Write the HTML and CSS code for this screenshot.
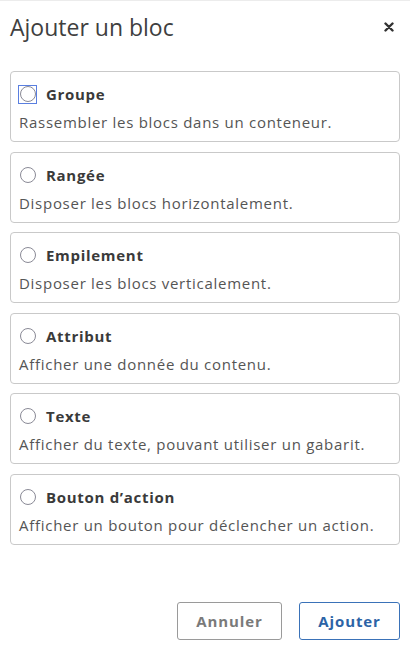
FILE: index.html
```html
<!DOCTYPE html>
<html lang="fr">
<head>
<meta charset="utf-8">
<title>Ajouter un bloc</title>
<link rel="stylesheet" href="styles.css">
</head>
<body>
<div class="dialog">
  <div class="header">
    <h1 class="title">Ajouter un bloc</h1>
    <button class="close" aria-label="Fermer">
      <svg width="10" height="10" viewBox="0 0 10 10"><path d="M1.5 1.5 L8.5 8.5 M8.5 1.5 L1.5 8.5" stroke="#333" stroke-width="2.4" stroke-linecap="round"/></svg>
    </button>
  </div>
  <div class="list">
    <label class="card">
      <span class="row"><span class="radio focus"><span class="circle"></span></span><span class="name">Groupe</span></span>
      <span class="desc">Rassembler les blocs dans un conteneur.</span>
    </label>
    <label class="card">
      <span class="row"><span class="radio"><span class="circle"></span></span><span class="name">Rangée</span></span>
      <span class="desc">Disposer les blocs horizontalement.</span>
    </label>
    <label class="card">
      <span class="row"><span class="radio"><span class="circle"></span></span><span class="name">Empilement</span></span>
      <span class="desc">Disposer les blocs verticalement.</span>
    </label>
    <label class="card">
      <span class="row"><span class="radio"><span class="circle"></span></span><span class="name">Attribut</span></span>
      <span class="desc">Afficher une donnée du contenu.</span>
    </label>
    <label class="card">
      <span class="row"><span class="radio"><span class="circle"></span></span><span class="name">Texte</span></span>
      <span class="desc">Afficher du texte, pouvant utiliser un gabarit.</span>
    </label>
    <label class="card">
      <span class="row"><span class="radio"><span class="circle"></span></span><span class="name">Bouton d’action</span></span>
      <span class="desc">Afficher un bouton pour déclencher un action.</span>
    </label>
  </div>
  <div class="footer">
    <button class="btn btn-cancel">Annuler</button>
    <button class="btn btn-primary">Ajouter</button>
  </div>
</div>
</body>
</html>
```
FILE: styles.css
```css
html, body {
  margin: 0;
  padding: 0;
  background: #fff;
}
body {
  font-family: "Open Sans", "Noto Sans", sans-serif;
  color: #3a3a3a;
}
.dialog {
  width: 410px;
  height: 652px;
  box-sizing: border-box;
  border-top: 1px solid #ececec;
  display: flex;
  flex-direction: column;
}
.header {
  display: flex;
  align-items: center;
  justify-content: space-between;
  padding: 11px 16px 0 10px;
}
.title {
  margin: 0;
  font-size: 23px;
  font-weight: 400;
  line-height: 30px;
  color: #3f3f3f;
}
.close {
  border: 0;
  background: none;
  padding: 0;
  width: 10px;
  height: 10px;
  display: flex;
}
.list {
  display: flex;
  flex-direction: column;
  gap: 9.5px;
  padding: 29px 10px 0 10px;
}
.card {
  display: flex;
  flex-direction: column;
  border: 1px solid #c9c9c9;
  border-radius: 4px;
  padding: 10px 8px 9px 8px;
}
.row {
  display: flex;
  align-items: center;
  height: 24px;
}
.radio {
  width: 19px;
  height: 19px;
  box-sizing: border-box;
  display: flex;
  align-items: center;
  justify-content: center;
  margin-left: -1px;
  margin-right: 9px;
}
.radio.focus {
  outline: 1.5px solid #5a7fe0;
  outline-offset: -1px;
}
.circle {
  width: 16px;
  height: 16px;
  box-sizing: border-box;
  border: 1px solid #8a8a96;
  border-radius: 50%;
  background: #fff;
}
.name {
  font-size: 15px;
  letter-spacing: 0.7px;
  font-weight: 700;
  color: #3a3a3a;
}
.desc {
  margin-top: 6px;
  font-size: 15px;
  letter-spacing: 0.72px;
  line-height: 20px;
  color: #555;
}
.footer {
  margin-top: auto;
  display: flex;
  justify-content: flex-end;
  gap: 17px;
  padding: 0 10px 12px 10px;
}
.btn {
  font-family: "Open Sans", "Noto Sans", sans-serif;
  font-size: 15px;
  letter-spacing: 0.9px;
  font-weight: 700;
  height: 38px;
  background: #fff;
  border-radius: 3px;
  padding: 0;
}
.btn-cancel {
  width: 105px;
  border: 1px solid #9a9a9a;
  color: #7a7a7a;
}
.btn-primary {
  width: 101px;
  border: 1px solid #3a72b8;
  color: #2c63a6;
}
```
